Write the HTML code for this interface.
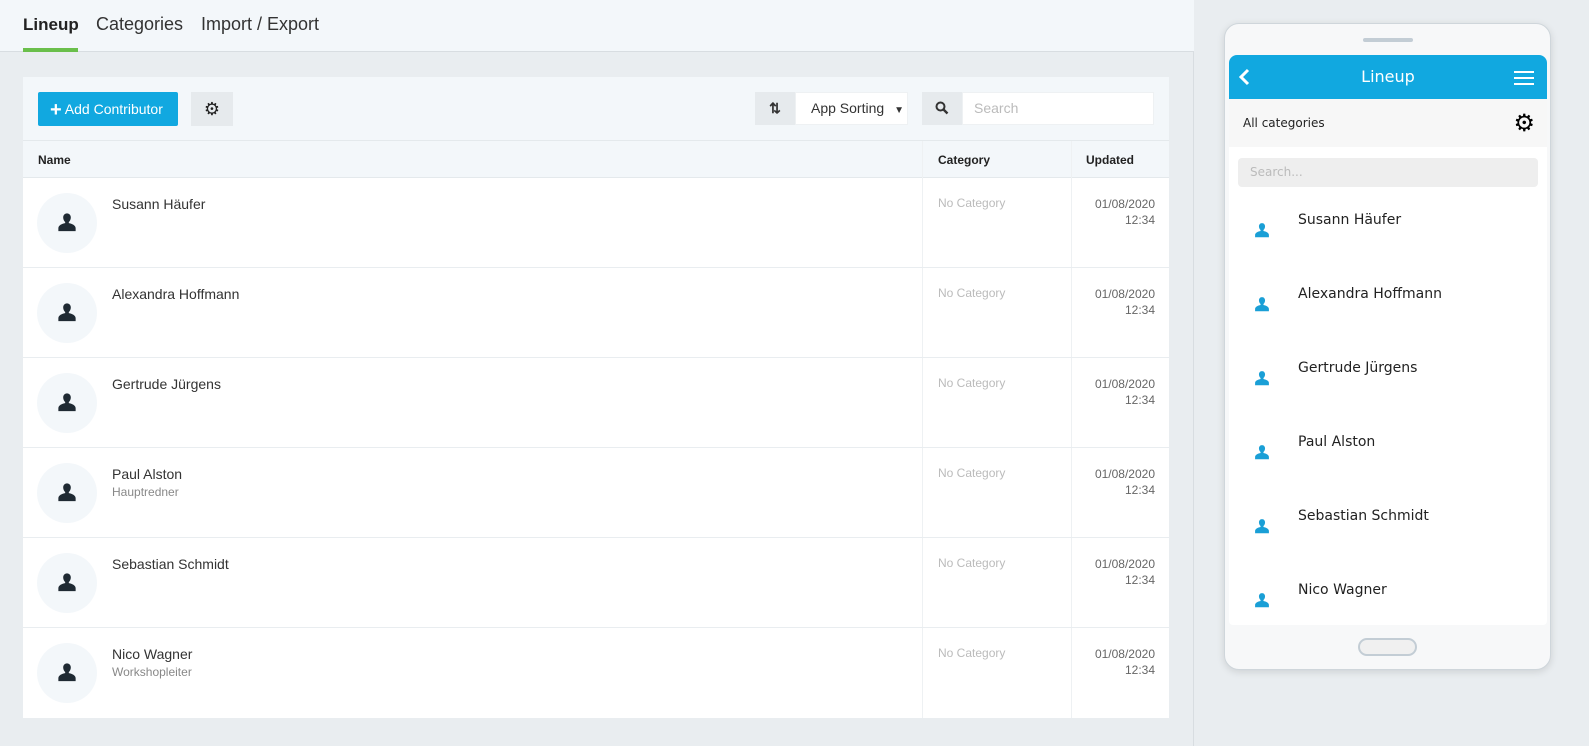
<!DOCTYPE html>
<html><head><meta charset="utf-8"><style>
*{box-sizing:border-box;margin:0;padding:0}
body{width:1589px;height:746px;overflow:hidden;background:#e9edf0;font-family:"Liberation Sans",sans-serif;position:relative;color:#333}
.left{position:absolute;left:0;top:0;width:1194px;height:746px;border-right:1px solid #d8dde1}
.hdr{position:absolute;left:0;top:0;width:1194px;height:52px;background:#f3f7fa;border-bottom:1px solid #d8dde1}
.tab{position:absolute;top:14px;font-size:18px;color:#333}
.card{position:absolute;left:23px;top:77px;width:1146px;height:641px;background:#fff}
.tb{position:absolute;left:0;top:0;width:1146px;height:64px;background:#f3f7fa;border-bottom:1px solid #e4e9ec}
.th{position:absolute;left:0;top:64px;width:1146px;height:37px;background:#f3f7fa;border-bottom:1px solid #e4e9ec;font-size:12px;font-weight:bold;color:#222}
.row{position:absolute;left:0;width:1146px;height:90px;border-bottom:1px solid #e9edf0}
.av{position:absolute;left:14px;top:15px;width:60px;height:60px;border-radius:50%;background:#f3f7fa}
.nm{position:absolute;left:89px;top:18px;font-size:14px;color:#333}
.sub{position:absolute;left:89px;top:37px;font-size:12px;color:#888}
.cat{position:absolute;left:915px;top:18px;font-size:12px;color:#bbb}
.dt{position:absolute;right:14px;top:18px;font-size:12px;color:#666;text-align:right;line-height:16px}
.vl{position:absolute;top:64px;width:1px;height:577px;background:#eef1f3}
.phone{position:absolute;left:1224px;top:23px;width:327px;height:647px;border-radius:15px;background:#f7f8f9;border:1px solid #cfd6db;box-shadow:0 2px 8px rgba(0,0,0,.12)}
.pr{position:absolute;left:0;width:317px;height:74px}
.pn{position:absolute;left:69px;top:13px;color:#222;font-family:"DejaVu Sans",sans-serif;font-size:14px}
</style></head><body>
<svg width="0" height="0" style="position:absolute"><defs><symbol id="u" viewBox="0 0 22 22"><path d="M11 1.5c-2.6 0-4.2 2-4.2 4.6 0 2.2 1 4 2.2 4.9v1.3c-3.5.8-7.5 2.3-7.5 5.5V21h19v-3.2c0-3.2-4-4.7-7.5-5.5V11c1.2-.9 2.2-2.7 2.2-4.9 0-2.6-1.6-4.6-4.2-4.6z"/></symbol></defs></svg>
<div class="left">
<div class="hdr">
<div class="tab" style="left:23px;font-weight:bold;color:#222;font-size:17px;top:15px">Lineup</div>
<div style="position:absolute;left:23px;top:48px;width:55px;height:4px;background:#6abf4b"></div>
<div class="tab" style="left:96px">Categories</div>
<div class="tab" style="left:201px">Import / Export</div>
</div>
<div class="card">
<div class="tb">
<div style="position:absolute;left:15px;top:15px;width:140px;height:34px;background:#11a8e0;border-radius:2px;color:#fff;font-size:14px;line-height:34px;padding-left:12px"><b style="font-size:20px;vertical-align:-2px">+</b> Add Contributor</div>
<div style="position:absolute;left:168px;top:15px;width:42px;height:34px;background:#e6eaed;text-align:center;line-height:34px;font-size:18px;color:#222">⚙</div>
<div style="position:absolute;left:732px;top:15px;width:40px;height:33px;background:#e6eaed;text-align:center;line-height:32px;font-size:14px;font-weight:bold;color:#333">⇅</div>
<div style="position:absolute;left:772px;top:15px;width:113px;height:33px;background:#fff;border:1px solid #eef1f3;font-size:14px;line-height:31px;padding-left:15px;color:#333">App Sorting <span style="font-size:10px;margin-left:6px">▼</span></div>
<div style="position:absolute;left:899px;top:15px;width:40px;height:33px;background:#e6eaed;text-align:center;line-height:33px;font-size:14px;font-weight:bold">
<svg width="14" height="14" viewBox="0 0 14 14" style="vertical-align:-2px"><circle cx="5.5" cy="5.5" r="4" fill="none" stroke="#333" stroke-width="2"/><path d="M8.5 8.5l4 4" stroke="#333" stroke-width="2.4"/></svg></div>
<div style="position:absolute;left:939px;top:15px;width:192px;height:33px;background:#fff;border:1px solid #eef1f3;font-size:14px;line-height:31px;padding-left:11px;color:#bbb">Search</div>
</div>
<div class="th"><span style="position:absolute;left:15px;top:12px">Name</span><span style="position:absolute;left:915px;top:12px">Category</span><span style="position:absolute;left:1063px;top:12px">Updated</span></div>
<div class="vl" style="left:899px"></div><div class="vl" style="left:1048px"></div>
</div>
</div>
<div class="phone">
<div style="position:absolute;left:138px;top:14px;width:50px;height:4px;border-radius:2px;background:#c3cdd5"></div>
<div style="position:absolute;left:4px;top:31px;width:318px;height:570px;background:#fff;border-radius:8px 8px 4px 4px;overflow:hidden">
<div style="position:absolute;left:0;top:0;width:318px;height:44px;background:#11a8e0;color:#fff;font-family:'DejaVu Sans',sans-serif;font-size:16px;text-align:center;line-height:44px">Lineup
<svg style="position:absolute;left:8px;top:13px" width="14" height="18" viewBox="0 0 14 18"><path d="M11 2L4 9l7 7" fill="none" stroke="#fff" stroke-width="3"/></svg>
<svg style="position:absolute;right:12px;top:15px" width="22" height="16" viewBox="0 0 22 16"><path d="M1 2h20M1 8h20M1 14h20" stroke="#fff" stroke-width="2"/></svg></div>
<div style="position:absolute;left:0;top:44px;width:318px;height:48px;background:#f7f7f7;font-family:'DejaVu Sans',sans-serif;font-size:12px;color:#222;line-height:48px;padding-left:14px">All categories<span style="position:absolute;right:12px;top:0;font-size:24px;color:#000">⚙</span></div>
<div style="position:absolute;left:9px;top:103px;width:300px;height:29px;background:#eeeeee;border-radius:4px;font-family:'DejaVu Sans',sans-serif;font-size:12px;color:#bbb;line-height:29px;padding-left:12px">Search...</div>
</div>
<div style="position:absolute;left:133px;top:614px;width:59px;height:18px;border-radius:9px;background:#f0f0f0;border:2px solid #c3cdd5"></div>
</div>
<div style="position:absolute;left:23px;top:178px">
<div class="row" style="top:0"><div class="av"><svg style="position:absolute;left:20px;top:19px" width="20" height="20" fill="#1f2a33"><use href="#u"/></svg></div><div class="nm">Susann Häufer</div><div class="cat">No Category</div><div class="dt">01/08/2020<br>12:34</div></div>
<div class="row" style="top:90px"><div class="av"><svg style="position:absolute;left:20px;top:19px" width="20" height="20" fill="#1f2a33"><use href="#u"/></svg></div><div class="nm">Alexandra Hoffmann</div><div class="cat">No Category</div><div class="dt">01/08/2020<br>12:34</div></div>
<div class="row" style="top:180px"><div class="av"><svg style="position:absolute;left:20px;top:19px" width="20" height="20" fill="#1f2a33"><use href="#u"/></svg></div><div class="nm">Gertrude Jürgens</div><div class="cat">No Category</div><div class="dt">01/08/2020<br>12:34</div></div>
<div class="row" style="top:270px"><div class="av"><svg style="position:absolute;left:20px;top:19px" width="20" height="20" fill="#1f2a33"><use href="#u"/></svg></div><div class="nm">Paul Alston</div><div class="sub">Hauptredner</div><div class="cat">No Category</div><div class="dt">01/08/2020<br>12:34</div></div>
<div class="row" style="top:360px"><div class="av"><svg style="position:absolute;left:20px;top:19px" width="20" height="20" fill="#1f2a33"><use href="#u"/></svg></div><div class="nm">Sebastian Schmidt</div><div class="cat">No Category</div><div class="dt">01/08/2020<br>12:34</div></div>
<div class="row" style="top:450px;border-bottom:none"><div class="av"><svg style="position:absolute;left:20px;top:19px" width="20" height="20" fill="#1f2a33"><use href="#u"/></svg></div><div class="nm">Nico Wagner</div><div class="sub">Workshopleiter</div><div class="cat">No Category</div><div class="dt">01/08/2020<br>12:34</div></div>
</div>
<div style="position:absolute;left:1229px;top:186px">
<div class="pr" style="top:0"><svg style="position:absolute;left:25px;top:36px" width="16" height="16" fill="#1a9fd6"><use href="#u"/></svg><div class="pn" style="top:26px">Susann Häufer</div></div>
<div class="pr" style="top:74px"><svg style="position:absolute;left:25px;top:36px" width="16" height="16" fill="#1a9fd6"><use href="#u"/></svg><div class="pn" style="top:26px">Alexandra Hoffmann</div></div>
<div class="pr" style="top:148px"><svg style="position:absolute;left:25px;top:36px" width="16" height="16" fill="#1a9fd6"><use href="#u"/></svg><div class="pn" style="top:26px">Gertrude Jürgens</div></div>
<div class="pr" style="top:222px"><svg style="position:absolute;left:25px;top:36px" width="16" height="16" fill="#1a9fd6"><use href="#u"/></svg><div class="pn" style="top:26px">Paul Alston</div></div>
<div class="pr" style="top:296px"><svg style="position:absolute;left:25px;top:36px" width="16" height="16" fill="#1a9fd6"><use href="#u"/></svg><div class="pn" style="top:26px">Sebastian Schmidt</div></div>
<div class="pr" style="top:370px"><svg style="position:absolute;left:25px;top:36px" width="16" height="16" fill="#1a9fd6"><use href="#u"/></svg><div class="pn" style="top:26px">Nico Wagner</div></div>
</div>
</body></html>
